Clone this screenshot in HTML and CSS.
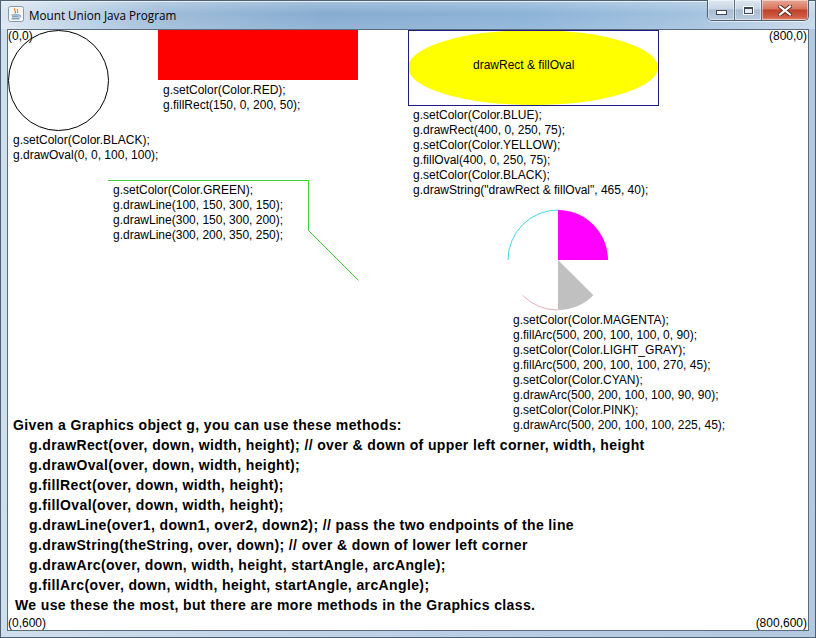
FILE: index.html
```html
<!DOCTYPE html>
<html>
<head>
<meta charset="utf-8">
<title>Mount Union Java Program</title>
<link rel="stylesheet" href="styles.css">
</head>
<body>
<div class="window">
  <div class="titlebar">
    <svg class="app-icon" width="16" height="16" viewBox="0 0 16 16">
      <rect x="0.5" y="0.5" width="15" height="15" rx="2" fill="#f4f6f8" stroke="#8a96a3"/>
      <path d="M7 2.5 C5 4 9 5 7 7.5" fill="none" stroke="#e76f00" stroke-width="1.1"/>
      <path d="M9.5 3 C8 4.5 11 5 9.2 7" fill="none" stroke="#e76f00" stroke-width="1"/>
      <path d="M3.5 9 H11 M4 10.8 H10.5 M3.5 12.8 H11.5" stroke="#5382a1" stroke-width="1"/>
      <path d="M11 9.2 C13.3 9 13.3 11.3 10.6 11.2" fill="none" stroke="#5382a1" stroke-width="0.9"/>
    </svg>
    <span class="title">Mount Union Java Program</span>
    <div class="caption-buttons">
      <div class="cbtn cbtn-min"><span class="min-glyph"></span></div>
      <div class="cbtn cbtn-max"><span class="max-glyph"></span></div>
      <div class="cbtn cbtn-close">
        <svg width="14" height="11" viewBox="0 0 14 11">
          <path d="M2 1.5 L12 9.5 M12 1.5 L2 9.5" stroke="#5a2a22" stroke-width="4" stroke-linecap="square"/>
          <path d="M2 1.5 L12 9.5 M12 1.5 L2 9.5" stroke="#ffffff" stroke-width="2.2" stroke-linecap="square"/>
        </svg>
      </div>
    </div>
  </div>
  <div class="client">
    <div class="canvas">
      <svg class="shapes" width="800" height="600" viewBox="0 0 800 600">
        <circle cx="50.5" cy="50.5" r="50" fill="none" stroke="#000" stroke-width="1"/>
        <rect x="150" y="0" width="200" height="50" fill="#ff0000"/>
        <ellipse cx="525" cy="37.5" rx="125" ry="37.5" fill="#ffff00"/>
        <rect x="400.5" y="0.5" width="250" height="75" fill="none" stroke="#1c1c82" stroke-width="1"/>
        <polyline points="100,150.5 300.5,150.5 300.5,200.5 350.5,250.5" fill="none" stroke="#3fcf3f" stroke-width="1"/>
        <path d="M550 230 L600 230 A50 50 0 0 0 550 180 Z" fill="#ff00ff"/>
        <path d="M550 230 L550 280 A50 50 0 0 0 585.36 265.36 Z" fill="#c0c0c0"/>
        <path d="M550 180 A50 50 0 0 0 500 230" fill="none" stroke="#45d6e6" stroke-width="1"/>
        <path d="M514.64 265.36 A50 50 0 0 0 550 280" fill="none" stroke="#e6b0b8" stroke-width="1"/>
      </svg>

      <div class="label corner corner-tl">(0,0)</div>
      <div class="label corner corner-tr">(800,0)</div>
      <div class="label corner corner-bl">(0,600)</div>
      <div class="label corner corner-br">(800,600)</div>

      <div class="label code-red">
        <div>g.setColor(Color.RED);</div>
        <div>g.fillRect(150, 0, 200, 50);</div>
      </div>

      <div class="label code-black">
        <div>g.setColor(Color.BLACK);</div>
        <div>g.drawOval(0, 0, 100, 100);</div>
      </div>

      <div class="label oval-text">drawRect &amp; fillOval</div>

      <div class="label code-blue">
        <div>g.setColor(Color.BLUE);</div>
        <div>g.drawRect(400, 0, 250, 75);</div>
        <div>g.setColor(Color.YELLOW);</div>
        <div>g.fillOval(400, 0, 250, 75);</div>
        <div>g.setColor(Color.BLACK);</div>
        <div>g.drawString("drawRect &amp; fillOval", 465, 40);</div>
      </div>

      <div class="label code-green">
        <div>g.setColor(Color.GREEN);</div>
        <div>g.drawLine(100, 150, 300, 150);</div>
        <div>g.drawLine(300, 150, 300, 200);</div>
        <div>g.drawLine(300, 200, 350, 250);</div>
      </div>

      <div class="label code-arc">
        <div>g.setColor(Color.MAGENTA);</div>
        <div>g.fillArc(500, 200, 100, 100, 0, 90);</div>
        <div>g.setColor(Color.LIGHT_GRAY);</div>
        <div>g.fillArc(500, 200, 100, 100, 270, 45);</div>
        <div>g.setColor(Color.CYAN);</div>
        <div>g.drawArc(500, 200, 100, 100, 90, 90);</div>
        <div>g.setColor(Color.PINK);</div>
        <div>g.drawArc(500, 200, 100, 100, 225, 45);</div>
      </div>

      <div class="label methods">
        <div>Given a Graphics object g, you can use these methods:</div>
        <div class="indent">g.drawRect(over, down, width, height); // over &amp; down of upper left corner, width, height</div>
        <div class="indent">g.drawOval(over, down, width, height);</div>
        <div class="indent">g.fillRect(over, down, width, height);</div>
        <div class="indent">g.fillOval(over, down, width, height);</div>
        <div class="indent">g.drawLine(over1, down1, over2, down2); // pass the two endpoints of the line</div>
        <div class="indent">g.drawString(theString, over, down); // over &amp; down of lower left corner</div>
        <div class="indent">g.drawArc(over, down, width, height, startAngle, arcAngle);</div>
        <div class="indent">g.fillArc(over, down, width, height, startAngle, arcAngle);</div>
        <div class="closing">We use these the most, but there are more methods in the Graphics class.</div>
      </div>
    </div>
  </div>
</div>
</body>
</html>
```
FILE: styles.css
```css
html, body {
  margin: 0;
  padding: 0;
  background: #ffffff;
}

.window {
  width: 816px;
  height: 638px;
  box-sizing: border-box;
  display: flex;
  flex-direction: column;
  border: 1px solid #4e6073;
  background:
    linear-gradient(to right, #cfdeec 0%, #c3d6e9 30%, #b7cde4 60%, #b3c9e0 100%);
}

.titlebar {
  height: 28px;
  display: flex;
  align-items: flex-start;
  background:
    linear-gradient(to bottom, rgba(255,255,255,0.25) 0%, rgba(255,255,255,0) 45%, rgba(255,255,255,0.1) 100%),
    linear-gradient(to right, #dbe6f1 0%, #c2d5e8 8%, #9ebcd9 20%, #86acd1 40%, #8cb3d8 65%, #a3c2df 85%, #c7d8e9 100%);
  box-shadow: inset 0 1px 0 #e9f0f7;
}

.app-icon {
  display: block;
  margin: 5px 0 0 7px;
  flex: none;
}

.title {
  margin: 6px 0 0 5px;
  font-family: "Open Sans", "Noto Sans", "Liberation Sans", sans-serif;
  font-size: 11.7px;
  line-height: 16px;
  color: #000;
}

.caption-buttons {
  margin-left: auto;
  margin-right: 6px;
  margin-top: -1px;
  display: flex;
  height: 20px;
  border: 1px solid #4f5f70;
  border-top: none;
  border-radius: 0 0 5px 5px;
  overflow: hidden;
  box-shadow: 0 1px 0 rgba(255,255,255,0.6);
}

.cbtn {
  height: 20px;
  display: flex;
  align-items: center;
  justify-content: center;
  box-shadow: inset 0 0 0 1px rgba(255,255,255,0.45);
}

.cbtn-min, .cbtn-max {
  width: 26px;
  background: linear-gradient(to bottom, #dfe8f1 0%, #c7d5e4 45%, #a9bccf 50%, #b9cbdd 100%);
  border-right: 1px solid #5f7185;
}

.cbtn-close {
  width: 46px;
  background: linear-gradient(to bottom, #e9a795 0%, #d7725d 45%, #c0412b 50%, #cf5d45 85%, #e08c70 100%);
}

.min-glyph {
  width: 9px;
  height: 3px;
  margin-top: 5px;
  background: #ffffff;
  border: 1px solid #3c4858;
}

.max-glyph {
  width: 7px;
  height: 4px;
  border: 1px solid #3c4858;
  border-top-width: 2px;
  background: #e8eef4;
  box-shadow: 0 0 0 1px #ffffff;
}

.cbtn-close svg {
  display: block;
}

.client {
  margin: 0 6px 6px 6px;
  border: 1px solid #596a7c;
  background: #ffffff;
}

.canvas {
  position: relative;
  width: 800px;
  height: 600px;
  overflow: hidden;
  font-family: "Liberation Sans", Arial, sans-serif;
  font-size: 12px;
  line-height: 15px;
  color: #000000;
}

.shapes {
  display: block;
}

.label {
  position: absolute;
  white-space: nowrap;
}

.corner { line-height: 13px; }
.corner-tl { left: 0; top: 0; }
.corner-tr { right: 1px; top: 0; }
.corner-bl { left: 0; top: 587px; }
.corner-br { right: 1px; top: 587px; }

.code-red { left: 155px; top: 53px; }
.code-black { left: 5px; top: 103px; }
.oval-text { left: 465px; top: 28px; }
.code-blue { left: 405px; top: 78px; }
.code-green { left: 105px; top: 153px; }
.code-arc { left: 505px; top: 283px; }

.methods {
  left: 5px;
  top: 385px;
  font-size: 14px;
  line-height: 20px;
  font-weight: bold;
  letter-spacing: 0.38px;
}

.methods .indent { padding-left: 16px; }
.methods .closing { padding-left: 2px; }
```
